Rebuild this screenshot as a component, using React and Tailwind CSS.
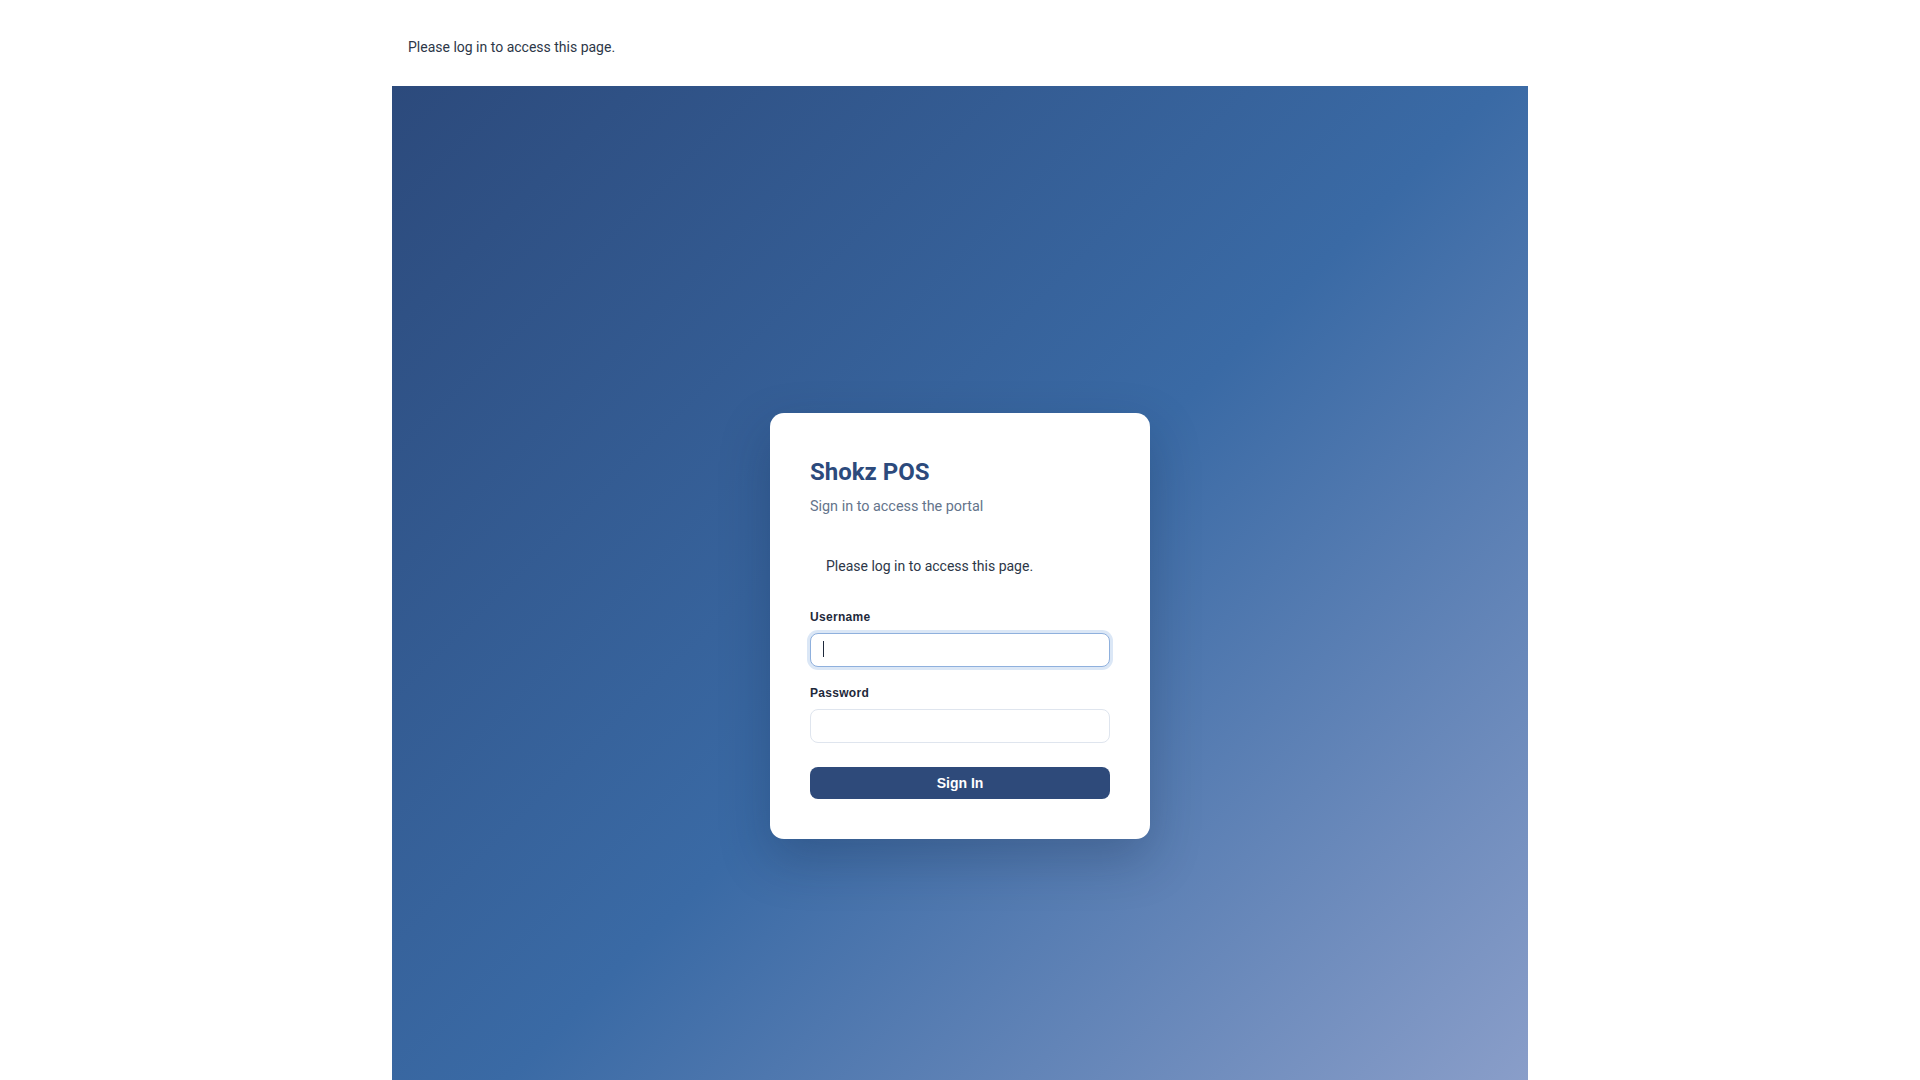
import React from 'react';

const Field = ({ label, type = 'text', active, className = '' }) => (
  <div className={className}>
    <label className="block mb-2 text-xs leading-4 font-bold tracking-wide text-[#1e293b] font-['Liberation_Sans',Arial,sans-serif]">
      {label}
    </label>
    <div className="relative">
      <input
        type={type}
        className={
          active
            ? "block w-full h-[34px] px-3 rounded-lg bg-white border border-[#8fb0dd] ring-[3px] ring-[#dbe7f6] outline-none text-sm text-[#1e293b] caret-transparent"
            : "block w-full h-[34px] px-3 rounded-lg bg-white border border-[#dfe5ee] outline-none text-sm text-[#1e293b] focus:border-[#8fb0dd] focus:ring-[3px] focus:ring-[#dbe7f6]"
        }
      />
      {/* caret of the focused field */}
      {active && <span className="absolute left-[13px] top-[8px] w-px h-4 bg-[#1e293b]" />}
    </div>
  </div>
);

const LoginCard = () => (
  <div className="w-[380px] bg-white rounded-[14px] px-10 pt-[41px] pb-10 shadow-[0_20px_50px_rgba(15,30,60,0.25)]">
    <div className="mb-[26px]">
      <h1 className="text-2xl leading-9 font-bold text-[#2c4a7c]">Shokz POS</h1>
      <p className="mt-[6px] text-[14.4px] leading-[21.6px] text-[#64748b]">Sign in to access the portal</p>
    </div>

    <div className="px-4 py-3 mb-[21px] text-sm leading-5 text-[#2d3748]">
      Please log in to access this page.
    </div>

    <form onSubmit={(e) => e.preventDefault()}>
      <Field label="Username" active className="mb-[18px]" />
      <Field label="Password" type="password" />
      <button
        type="submit"
        className="mt-6 w-full h-8 rounded-lg bg-[#2e4a7a] text-white text-sm font-bold font-['Liberation_Sans',Arial,sans-serif]"
      >
        Sign In
      </button>
    </form>
  </div>
);

export default function App() {
  return (
    <div className="min-h-screen bg-white font-['Roboto','Liberation_Sans',sans-serif] text-[#2d3748]">
      <div className="w-[1136px] mx-auto">
        <div className="pt-[37px] pb-[29px] px-4 text-sm leading-5 text-[#2d3748]">
          Please log in to access this page.
        </div>
        <div className="min-h-screen flex items-center justify-center bg-[linear-gradient(135deg,#2c4a7c_0%,#3a6aa5_50%,#90a2cc_100%)]">
          <LoginCard />
        </div>
      </div>
    </div>
  );
}
